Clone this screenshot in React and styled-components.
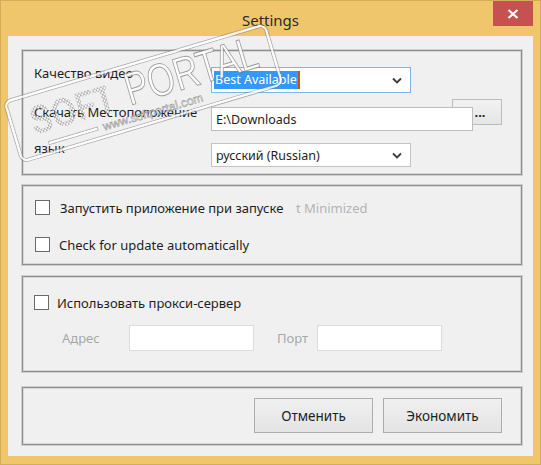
import styled, { createGlobalStyle } from 'styled-components';

const GlobalStyle = createGlobalStyle`
  html, body { margin: 0; padding: 0; }
  body {
    width: 541px;
    height: 465px;
    overflow: hidden;
    font-family: "Noto Sans", "DejaVu Sans", sans-serif;
    font-size: 13px;
    color: #1e1e1e;
  }
`;

const Window = styled.div`
  position: relative;
  width: 541px;
  height: 465px;
  box-sizing: border-box;
  background: #efc66b;
  border: 1px solid #d2ad5a;
  display: flex;
  flex-direction: column;
  overflow: hidden;
`;

const TitleBar = styled.div`
  height: 35px;
  display: flex;
  align-items: center;
  justify-content: center;
  position: relative;
`;

const Title = styled.span`
  font-size: 15px;
  color: #2b2b2b;
  margin-top: 2px;
`;

const CloseButton = styled.div`
  position: absolute;
  top: 0;
  right: 7px;
  width: 40px;
  height: 25px;
  background: #c75050;
  display: flex;
  align-items: center;
  justify-content: center;
`;

const Client = styled.div`
  flex: 1;
  margin: 0 7px 8px 7px;
  background: #f0f0f0;
  padding: 14px 11px 0 14px;
  display: flex;
  flex-direction: column;
`;

const Group = styled.div`
  box-sizing: border-box;
  height: ${({ h }) => h}px;
  margin-bottom: ${({ mb }) => mb || 0}px;
  border: 1px solid #8e8e8e;
  box-shadow: inset 0 0 0 1px #d6d6d6, 0 0 0 1px #cfcfcf;
  position: relative;
  padding: ${({ pad }) => pad};
  display: flex;
  flex-direction: column;
`;

const FormRow = styled.div`
  display: flex;
  align-items: flex-start;
  margin-top: ${({ mt }) => mt}px;
`;

const Label = styled.div`
  width: 177px;
  flex: none;
  line-height: 16px;
  margin-top: ${({ mt }) => mt}px;
  white-space: nowrap;
`;

const Combo = styled.div`
  box-sizing: border-box;
  width: 200px;
  height: ${({ h }) => h}px;
  background: #fff;
  border: 1px solid ${({ focused }) => (focused ? '#7eb4ea' : '#c3c3c3')};
  display: flex;
  align-items: center;
  padding: 0 8px 0 2px;
`;

const ComboText = styled.span`
  flex: 1;
  display: flex;
  align-items: center;
  white-space: nowrap;
  font-size: 12.5px;
  padding-left: ${({ selected }) => (selected ? 0 : 2)}px;
`;

const Selection = styled.span`
  background: #3399ff;
  color: #fff;
  padding: 1px 1px;
  line-height: 16px;
  border-right: 2px solid #c2561a;
`;

const Chevron = () => (
  <svg width="10" height="7" viewBox="0 0 10 7">
    <path d="M1 1.5 L5 5.5 L9 1.5" fill="none" stroke="#3c3c3c" strokeWidth="1.8" />
  </svg>
);

const PathField = styled.div`
  display: flex;
  align-items: flex-start;
`;

const TextInput = styled.div`
  box-sizing: border-box;
  width: ${({ w }) => w}px;
  height: ${({ h }) => h}px;
  margin-top: ${({ mt }) => mt || 0}px;
  background: #fff;
  border: 1px solid ${({ light }) => (light ? '#dcdcdc' : '#bdbdbd')};
  display: flex;
  align-items: center;
  padding-left: 4px;
  font-size: 12.5px;
  position: relative;
  z-index: 1;
`;

const BrowseButton = styled.div`
  box-sizing: border-box;
  width: 50px;
  height: 26px;
  margin-left: -21px;
  background: linear-gradient(#f2f2f2, #e6e6e6);
  border: 1px solid #bcbcbc;
  display: flex;
  align-items: center;
  justify-content: center;
  padding-left: 6px;
  font-weight: bold;
  font-size: 13px;
  color: #222;
`;

const CheckRow = styled.div`
  display: flex;
  align-items: center;
  gap: ${({ gap }) => gap}px;
  margin-top: ${({ mt }) => mt}px;
  margin-left: ${({ ml }) => ml}px;
  position: relative;
`;

const Box = styled.span`
  box-sizing: border-box;
  width: 15px;
  height: 15px;
  flex: none;
  background: #fff;
  border: 1px solid #6a6a6a;
`;

const CheckText = styled.span`
  line-height: 16px;
  margin-top: 2px;
  white-space: nowrap;
  background: #f0f0f0;
  position: relative;
  z-index: 1;
  padding-right: 4px;
`;

const HiddenLabel = styled.span`
  position: absolute;
  left: 261px;
  top: 2px;
  line-height: 16px;
  color: #b4b4b4;
  white-space: nowrap;
`;

const ProxyRow = styled.div`
  display: flex;
  align-items: center;
  margin-top: 14px;
  margin-left: 39px;
`;

const DimLabel = styled.span`
  color: #a8a8a8;
  width: ${({ w }) => w}px;
  margin-left: ${({ ml }) => ml || 0}px;
  flex: none;
`;

const ButtonBar = styled.div`
  display: flex;
  justify-content: flex-end;
  gap: 10px;
  padding: 10px 19px 0 0;
`;

const Button = styled.div`
  box-sizing: border-box;
  width: 119px;
  height: 35px;
  background: linear-gradient(#f0f0f0, #e4e4e4);
  border: 1px solid #adadad;
  display: flex;
  align-items: center;
  justify-content: center;
  font-size: 13.5px;
`;

/* softportal stamp laid over the dialog */
const Watermark = styled.div`
  position: absolute;
  left: 6px;
  top: 60px;
  width: 273px;
  height: 64px;
  box-sizing: border-box;
  transform: rotate(-16.6deg);
  border: 2px solid rgba(255, 255, 255, 0.85);
  box-shadow: 0 0 0 1px rgba(130, 130, 130, 0.55), inset 0 0 0 1px rgba(130, 130, 130, 0.55);
  border-radius: 7px;
  pointer-events: none;
  z-index: 5;
  display: flex;
  flex-direction: column;
  align-items: flex-start;
  padding: 2px 0 0 18px;
  font-family: "Liberation Sans", Arial, sans-serif;
`;

const MarkTop = styled.div`
  display: flex;
  align-items: flex-end;
  height: 40px;
  white-space: nowrap;
`;

const Soft = styled.span`
  display: inline-block;
  width: 100px;
  font-size: 40px;
  line-height: 34px;
  font-weight: bold;
  transform: scaleX(0.82);
  transform-origin: left bottom;
  background: radial-gradient(circle, #ffffff 38%, rgba(110, 110, 110, 0.75) 50%, transparent 66%) 0 0 / 4px 4px;
  -webkit-background-clip: text;
  background-clip: text;
  color: transparent;
`;

const Portal = styled.span`
  display: inline-block;
  font-size: 46px;
  line-height: 40px;
  transform: scaleX(0.76);
  transform-origin: left bottom;
  color: rgba(255, 255, 255, 0.85);
  -webkit-text-stroke: 1px rgba(110, 110, 110, 0.65);
`;

const MarkBottom = styled.div`
  display: flex;
  align-items: center;
  gap: 6px;
  margin: 2px 0 0 12px;
  font-size: 12px;
  line-height: 14px;
  white-space: nowrap;
  color: rgba(255, 255, 255, 0.9);
  -webkit-text-stroke: 0.6px rgba(110, 110, 110, 0.65);
`;

const Rule = styled.span`
  width: 50px;
  height: 2px;
  background: rgba(255, 255, 255, 0.85);
  box-shadow: 0 0 0 1px rgba(130, 130, 130, 0.5);
`;

export default function App() {
  return (
    <>
      <GlobalStyle />
      <Window>
        <TitleBar>
          <Title>Settings</Title>
          <CloseButton>
            <svg width="12" height="10" viewBox="0 0 12 10">
              <path d="M1.5 1 L10.5 9 M10.5 1 L1.5 9" stroke="#fff" strokeWidth="2.2" />
            </svg>
          </CloseButton>
        </TitleBar>
        <Client>
          <Group h={125} mb={10} pad="0 0 0 11px">
            <FormRow mt={16}>
              <Label mt={-2}>Качество видео</Label>
              <Combo h={26} focused>
                <ComboText selected>
                  <Selection>Best Available</Selection>
                </ComboText>
                <Chevron />
              </Combo>
            </FormRow>
            <FormRow mt={6}>
              <Label mt={5}>Скачать Местоположение</Label>
              <PathField>
                <TextInput w={262} h={24} mt={8}>E:\Downloads</TextInput>
                <BrowseButton>...</BrowseButton>
              </PathField>
            </FormRow>
            <FormRow mt={12}>
              <Label mt={-3}>язык</Label>
              <Combo h={24}>
                <ComboText>русский (Russian)</ComboText>
                <Chevron />
              </Combo>
            </FormRow>
          </Group>

          <Group h={80} mb={11} pad="0">
            <CheckRow mt={12} ml={12} gap={10}>
              <Box />
              <CheckText>Запустить приложение при запуске</CheckText>
              <HiddenLabel>t Minimized</HiddenLabel>
            </CheckRow>
            <CheckRow mt={19} ml={12} gap={9}>
              <Box />
              <CheckText>Check for update automatically</CheckText>
            </CheckRow>
          </Group>

          <Group h={96} mb={15} pad="0">
            <CheckRow mt={16} ml={11} gap={8}>
              <Box />
              <CheckText>Использовать прокси-сервер</CheckText>
            </CheckRow>
            <ProxyRow>
              <DimLabel w={67}>Адрес</DimLabel>
              <TextInput w={125} h={26} light />
              <DimLabel w={40} ml={23}>Порт</DimLabel>
              <TextInput w={125} h={26} light />
            </ProxyRow>
          </Group>

          <Group h={58} pad="0">
            <ButtonBar>
              <Button>Отменить</Button>
              <Button>Экономить</Button>
            </ButtonBar>
          </Group>
        </Client>
        <Watermark>
          <MarkTop>
            <Soft>SOFT</Soft>
            <Portal>PORTAL</Portal>
          </MarkTop>
          <MarkBottom>
            <Rule />
            <span>www.softportal.com</span>
          </MarkBottom>
        </Watermark>
      </Window>
    </>
  );
}
